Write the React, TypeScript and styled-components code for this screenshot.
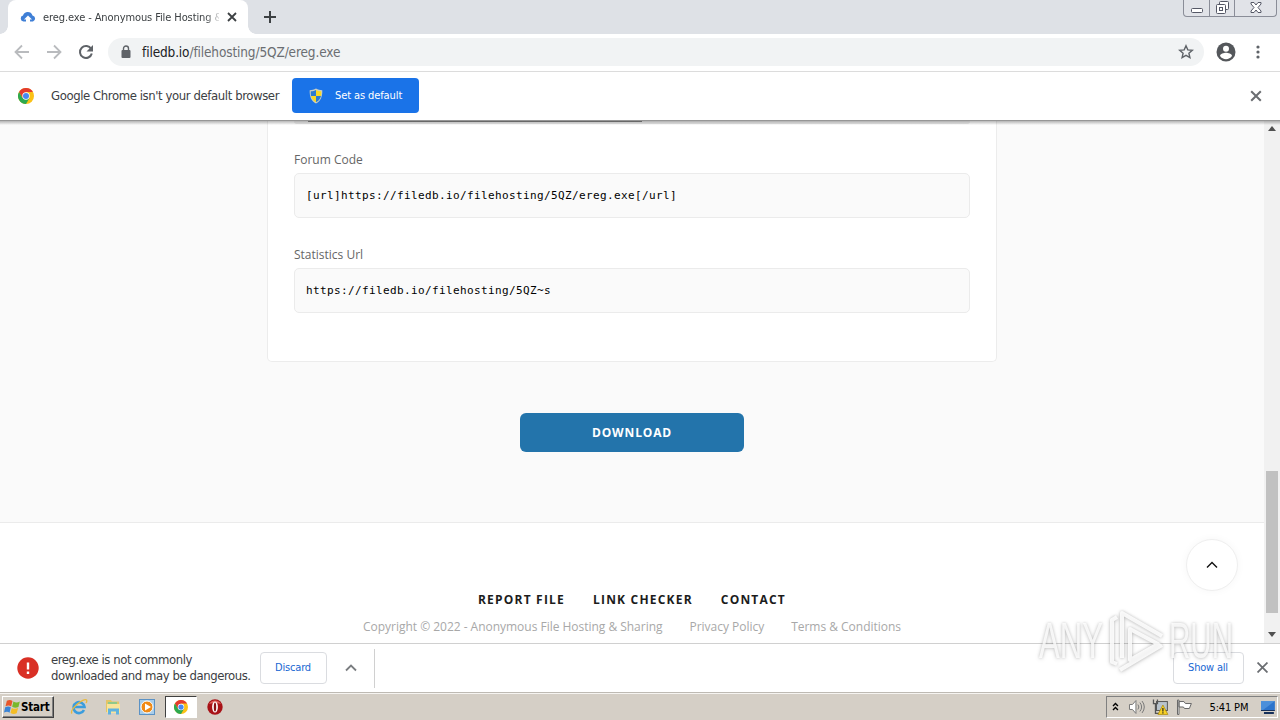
import React from 'react';
import styled, { createGlobalStyle } from 'styled-components';

const ui = "'DejaVu Sans Condensed', 'DejaVu Sans', sans-serif";

const GlobalStyle = createGlobalStyle`
  * { box-sizing: border-box; }
  body { margin: 0; overflow: hidden; }
`;

const Screen = styled.div`
  position: relative;
  display: flex;
  flex-direction: column;
  width: 1280px;
  height: 720px;
  overflow: hidden;
  background: #fff;
  color: #3c4043;
  font-family: ${ui};
  font-stretch: condensed;
`;

const TabStrip = styled.header`
  display: flex;
  flex: 0 0 34px;
  background: #dee1e6;
`;

const TabCorner = styled.div<{ $side: 'left' | 'right' }>`
  align-self: flex-end;
  width: 8px;
  height: 8px;
  background: radial-gradient(circle at ${({ $side }) => ($side === 'left' ? '0 0' : '100% 0')}, transparent 7.5px, #fff 8px);
`;

const Tab = styled.div`
  display: flex;
  align-items: center;
  width: 240px;
  padding: 0 11px 0 12px;
  border-radius: 8px 8px 0 0;
  background: #fff;
`;

const TabTitle = styled.span`
  width: 176px;
  margin: 0 8px 0 7px;
  overflow: hidden;
  white-space: nowrap;
  font-size: 11px;
  letter-spacing: -0.1px;
  mask-image: linear-gradient(90deg, #000 92%, rgba(0, 0, 0, 0.2));
`;

const NewTab = styled.div`
  display: flex;
  align-items: center;
  margin-left: 7px;
`;

const WindowButtons = styled.div`
  display: grid;
  grid-template-columns: 25px 25px 1fr;
  width: 94px;
  height: 17px;
  margin: 0 3px 0 auto;
  border: 1px solid #8a8d98;
  border-top: 0;
  border-radius: 0 0 4px 4px;
  background: #e1e3e8;
`;

const WindowButton = styled.div`
  display: flex;
  align-items: center;
  justify-content: center;
  padding-bottom: 1px;
  & + & { border-left: 1px solid #8a8d98; }
`;

const Toolbar = styled.div`
  display: flex;
  align-items: center;
  flex: 0 0 38px;
  padding: 0 14px 1px;
  gap: 16px;
  border-bottom: 1px solid #dcdcdc;
`;

const AddressBar = styled.div`
  display: flex;
  align-items: center;
  width: 1096px;
  height: 28px;
  margin-left: -2px;
  padding: 0 10px 0 12px;
  border-radius: 14px;
  background: #f1f3f4;
`;

const Address = styled.span`
  flex: 1;
  margin-left: 10px;
  color: #6b6e72;
  font-size: 13.5px;
  letter-spacing: -0.13px;
  b { color: #202124; font-weight: 400; }
`;

const InfoBar = styled.div`
  display: flex;
  align-items: center;
  flex: 0 0 49px;
  padding: 0 18px 1px;
  border-bottom: 1px solid #969696;
  font-size: 13px;
  > button { margin-left: 13px; }
  > svg:last-child { margin-left: auto; }
`;

const InfoText = styled.span`
  width: 228px;
  margin-left: 17px;
  white-space: nowrap;
  letter-spacing: -0.41px;
`;

const DefaultButton = styled.button`
  display: flex;
  align-items: center;
  width: 127px;
  height: 35px;
  padding: 0 0 0 16px;
  gap: 11px;
  border: 0;
  border-radius: 4px;
  background: #1a73e8;
  color: #fff;
  font: 11px ${ui};
  letter-spacing: -0.1px;
`;

const Viewport = styled.div`
  position: relative;
  display: flex;
  flex: 0 0 522px;
  background: #fafafa;

  &::after {
    content: '';
    position: absolute;
    inset: 0 0 auto;
    height: 4px;
    background: linear-gradient(rgba(0, 0, 0, 0.28), transparent);
  }
`;

const Page = styled.main`
  display: flex;
  flex-direction: column;
  align-items: center;
  width: 1264px;
  font-family: 'Open Sans', sans-serif;
  font-stretch: normal;
`;

const LinksCard = styled.section`
  width: 730px;
  height: 241px;
  padding: 0 26px;
  border: 1px solid #ececec;
  border-top: 0;
  border-radius: 0 0 5px 5px;
  background: #fff;
`;

const ClippedField = styled.div`
  height: 3px;
  padding-left: 14px;
  border-bottom: 1px solid #ebebeb;
  border-radius: 0 0 4px 4px;
  background: rgba(0, 0, 0, 0.05);

  &::before {
    content: '';
    display: block;
    width: 334px;
    height: 1px;
    background: #8a8a8a;
  }
`;

const Field = styled.label`
  display: block;
  height: 95px;
  padding-top: 26px;
`;

const FieldLabel = styled.span`
  display: block;
  height: 23px;
  color: #666;
  font-size: 12px;
  line-height: 20px;
`;

const Code = styled.div`
  height: 45px;
  padding-left: 11px;
  border: 1px solid #ebebeb;
  border-radius: 5px;
  background: #fafafa;
  color: #000;
  font-family: 'DejaVu Sans Mono', monospace;
  font-size: 11px;
  line-height: 43px;
  letter-spacing: 0.378px;
`;

const DownloadButton = styled.button`
  width: 224px;
  height: 39px;
  margin-top: 51px;
  border: 0;
  border-radius: 6px;
  background: #2374ab;
  color: #fff;
  font: 700 12px 'Open Sans', sans-serif;
  letter-spacing: 0.85px;
`;

const Footer = styled.footer`
  display: flex;
  flex-direction: column;
  align-items: center;
  width: 100%;
  height: 121px;
  margin-top: auto;
  padding-top: 67px;
  border-top: 1px solid #ebebeb;
  background: #fff;
`;

const FooterLinks = styled.nav`
  display: flex;
  gap: 28px;
  color: #1c1c1c;
  font-size: 12px;
  font-weight: 700;
  line-height: 20px;
  letter-spacing: 1.2px;
`;

const Legal = styled.div`
  display: flex;
  gap: 27px;
  margin-top: 7px;
  color: #a8a8a8;
  font-size: 12px;
  line-height: 20px;
  letter-spacing: -0.02px;
`;

const ToTop = styled.div`
  position: absolute;
  left: 1186px;
  top: 539px;
  display: flex;
  align-items: center;
  justify-content: center;
  width: 52px;
  height: 52px;
  border: 1px solid #efefef;
  border-radius: 50%;
  background: #fff;
  box-shadow: 0 0 8px rgba(0, 0, 0, 0.04);
`;

const Scrollbar = styled.div`
  display: flex;
  flex-direction: column;
  align-items: center;
  width: 16px;
  padding: 5px 0 6px;
  background: #f1f1f1;
`;

const Thumb = styled.div`
  width: 12px;
  height: 142px;
  margin: auto 0 19px;
  background: #c1c1c1;
`;

const DownloadShelf = styled.div`
  display: flex;
  align-items: center;
  flex: 0 0 49px;
  padding: 0 12px 0 17px;
  border-top: 1px solid #d0d0d0;
  background: #fff;
`;

const DownloadText = styled.div`
  width: 200px;
  margin: 0 9px 0 12px;
  font-size: 13px;
  line-height: 16px;
  letter-spacing: -0.44px;
  white-space: nowrap;
`;

const ShelfButton = styled.button<{ $width: number }>`
  width: ${({ $width }) => $width}px;
  height: 32px;
  padding: 0 1px 1px 0;
  border: 1px solid #dadce0;
  border-radius: 4px;
  background: #fff;
  color: #1967d2;
  font: 11px ${ui};
  letter-spacing: -0.2px;
`;

const Divider = styled.div`
  width: 1px;
  height: 39px;
  margin: 0 auto 0 17px;
  background: #d0d0d0;
`;

const Taskbar = styled.footer`
  display: flex;
  align-items: center;
  flex: 0 0 28px;
  padding: 1px 2px 0;
  border-top: 1px solid #bebab3;
  background: #d5cfc6;
  box-shadow: inset 0 1px #f6f4f1;
`;

const StartButton = styled.div`
  display: flex;
  align-items: center;
  width: 52px;
  height: 22px;
  padding-left: 1px;
  border: 1px solid;
  border-color: #fff #404040 #404040 #fff;
  box-shadow: inset -1px -1px #808080;
  color: #000;
  font-size: 11.5px;
  font-weight: 700;
  letter-spacing: -0.2px;
`;

const QuickLaunch = styled.div`
  display: flex;
  align-items: center;
  margin-left: 8px;
`;

const Launcher = styled.div<{ $active?: boolean }>`
  display: flex;
  align-items: center;
  justify-content: center;
  width: 34px;
  height: 22px;
  ${({ $active }) => $active && `
    width: 32px;
    margin: 0 1px;
    background: #fff;
    border: 1px solid;
    border-color: #404040 #fff #fff #404040;
  `}
`;

const Tray = styled.div`
  display: flex;
  align-items: center;
  width: 172px;
  height: 22px;
  margin-left: auto;
  padding: 0 1px 0 5px;
  border: 1px solid;
  border-color: #808080 #fff #fff #808080;
  color: #000;
  font-size: 11px;
`;

const Clock = styled.span`
  width: 42px;
  margin: 0 9px 0 17px;
  white-space: nowrap;
  letter-spacing: -0.15px;
`;

const Watermark = styled.svg`
  position: absolute;
  left: 1030px;
  top: 600px;
  filter: drop-shadow(0 0 1.5px rgba(0, 0, 0, 0.22)) drop-shadow(0 1px 2px rgba(0, 0, 0, 0.16));
`;

const Cross = ({ size = 10, color = '#5f6368', w = 1.8 }) => (
  <svg width={size} height={size} viewBox="0 0 10 10" stroke={color} strokeWidth={w}>
    <path d="M1 1l8 8M9 1L1 9" />
  </svg>
);

const Chevron = ({ color = '#7a7d80', w = 1.8 }) => (
  <svg width="12" height="8" viewBox="0 0 12 8" fill="none" stroke={color} strokeWidth={w}>
    <path d="M1 6.5l5-5 5 5" />
  </svg>
);

const ChromeLogo = ({ size = 16 }) => (
  <svg width={size} height={size} viewBox="0 0 16 16">
    <circle cx="8" cy="8" r="8" fill="#fbc116" />
    <path d="M8 4h6.93A8 8 0 0 0 1.07 4L4.5 10z" fill="#e33b2e" />
    <path d="M1.07 4A8 8 0 0 0 8 16l3.5-6L4.5 10z" fill="#2da94f" />
    <circle cx="8" cy="8" r="3.7" fill="#fff" />
    <circle cx="8" cy="8" r="3" fill="#4688f1" />
  </svg>
);

const Shield = () => (
  <svg width="16" height="16" viewBox="0 0 16 16">
    <path d="M8 .5c2 1.3 4 1.7 6.3 1.7C14.5 8 13 13 8 15.6 3 13 1.5 8 1.7 2.2 4 2.2 6 1.8 8 .5z" fill="#c9cfc4" />
    <path d="M8 2v6H3C2.7 6.5 2.7 5 2.8 3.3 5 3.2 6.5 2.8 8 2z" fill="#2b7bd0" />
    <path d="M8 2v6h5c.3-1.5.3-3 .2-4.7C11 3.2 9.5 2.8 8 2z" fill="#f7d824" />
    <path d="M8 8v6.3C5 12.7 3.6 10.5 3 8z" fill="#f7d824" />
    <path d="M8 8v6.3c3-1.6 4.4-3.8 5-6.3z" fill="#2b7bd0" />
  </svg>
);

const Arrow = ({ flip = false }) => (
  <svg width="16" height="16" viewBox="0 0 16 16" fill="none" stroke="#b9bbbe" strokeWidth="1.8">
    <path d={flip ? 'M1 8h13M8 1.5L14.5 8 8 14.5' : 'M15 8H2M8 1.5L1.5 8 8 14.5'} />
  </svg>
);

export default function App() {
  return (
    <Screen>
      <GlobalStyle />
      <TabStrip>
        <TabCorner $side="left" />
        <Tab>
          <svg width="16" height="16" viewBox="0 0 16 16">
            <path d="M6 12.5H3.5A3 3 0 0 1 3 6.6 5 5 0 0 1 12.5 6.5 3.1 3.1 0 0 1 13 12.500H10V10.500H12L8 6.500 4 10.500H6z" fill="#3f7fd6" />
          </svg>
          <TabTitle>ereg.exe - Anonymous File Hosting &amp; Sharing</TabTitle>
          <Cross color="#3c4043" />
        </Tab>
        <TabCorner $side="right" />
        <NewTab>
          <svg width="14" height="14" viewBox="0 0 14 14" stroke="#3c4043" strokeWidth="2"><path d="M7 1v12M1 7h12" /></svg>
        </NewTab>
        <WindowButtons>
          <WindowButton>
            <svg width="12" height="13" viewBox="0 0 12 13"><rect x=".5" y="7.5" width="11" height="4" rx="1" fill="#fff" stroke="#555866" /></svg>
          </WindowButton>
          <WindowButton>
            <svg width="13" height="13" viewBox="0 0 13 13" fill="#fff" stroke="#555866"><rect x="3.5" y=".5" width="9" height="8" rx="1" /><rect x=".5" y="3.5" width="9" height="9" rx="1" /><rect x="3.5" y="6.5" width="3" height="3" /></svg>
          </WindowButton>
          <WindowButton>
            <svg width="12" height="11" viewBox="0 0 12 11" fill="#fff" stroke="#555866"><path d="M1 .5h3l2 2.5L8 .5h3V2L8 5.500l3 3.500v1.500H8L6 8l-2 2.500H1V9l3-3.500L1 2z" /></svg>
          </WindowButton>
        </WindowButtons>
      </TabStrip>

      <Toolbar>
        <Arrow />
        <Arrow flip />
        <svg width="16" height="16" viewBox="0 0 16 16"><path d="M13.2 5A6 6 0 1 0 13.8 9.5" fill="none" stroke="#5f6368" strokeWidth="2" /><path d="M15 1v6.5H8.500z" fill="#5f6368" /></svg>
        <AddressBar>
          <svg width="12" height="14" viewBox="0 0 12 14"><rect x="1.5" y="5" width="9" height="8" rx="1" fill="#5f6368" /><path d="M3.5 6V3.5a2.5 2.5 0 0 1 5 0V6" fill="none" stroke="#5f6368" strokeWidth="1.4" /></svg>
          <Address><b>filedb.io</b>/filehosting/5QZ/ereg.exe</Address>
          <svg width="16" height="16" viewBox="0 0 16 16" fill="none" stroke="#5f6368" strokeWidth="1.4"><path d="M8 1.8l1.8 4.1 4.5.4-3.4 2.9 1 4.4L8 11.3l-3.9 2.3 1-4.4L1.7 6.3l4.5-.4z" /></svg>
        </AddressBar>
        <svg width="20" height="20" viewBox="0 0 20 20" style={{ marginLeft: -4 }}><circle cx="10" cy="10" r="9.5" fill="#54575b" /><circle cx="10" cy="6.8" r="3" fill="#fff" /><path d="M4 14c0-2.3 4-3.3 6-3.3s6 1 6 3.3a7.2 7.2 0 0 1-12 0z" fill="#fff" /></svg>
        <svg width="4" height="16" viewBox="0 0 4 16" fill="#5f6368" style={{ marginLeft: 4 }}><circle cx="2" cy="3" r="1.6" /><circle cx="2" cy="8" r="1.6" /><circle cx="2" cy="13" r="1.6" /></svg>
      </Toolbar>

      <InfoBar>
        <ChromeLogo />
        <InfoText>Google Chrome isn't your default browser</InfoText>
        <DefaultButton><Shield />Set as default</DefaultButton>
        <Cross size={12} color="#6b6e72" w={1.7} />
      </InfoBar>

      <Viewport>
        <Page>
          <LinksCard>
            <ClippedField />
            <Field>
              <FieldLabel>Forum Code</FieldLabel>
              <Code>[url]https://filedb.io/filehosting/5QZ/ereg.exe[/url]</Code>
            </Field>
            <Field>
              <FieldLabel>Statistics Url</FieldLabel>
              <Code>https://filedb.io/filehosting/5QZ~s</Code>
            </Field>
          </LinksCard>
          <DownloadButton>DOWNLOAD</DownloadButton>
          <Footer>
            <FooterLinks>
              <span>REPORT FILE</span>
              <span>LINK CHECKER</span>
              <span>CONTACT</span>
            </FooterLinks>
            <Legal>
              <span>Copyright © 2022 - Anonymous File Hosting &amp; Sharing</span>
              <span>Privacy Policy</span>
              <span>Terms &amp; Conditions</span>
            </Legal>
          </Footer>
        </Page>
        <Scrollbar>
          <svg width="8" height="5" viewBox="0 0 8 5"><path d="M0 5l4-5 4 5z" fill="#505050" /></svg>
          <Thumb />
          <svg width="8" height="5" viewBox="0 0 8 5"><path d="M0 0l4 5 4-5z" fill="#505050" /></svg>
        </Scrollbar>
      </Viewport>
      <ToTop><Chevron color="#111" w={1.4} /></ToTop>

      <DownloadShelf>
        <svg width="22" height="22" viewBox="0 0 22 22"><circle cx="11" cy="11" r="10.7" fill="#d93025" /><path d="M11 5.5v7M11 14.5V17" stroke="#fff" strokeWidth="2.4" /></svg>
        <DownloadText>ereg.exe is not commonly<br />downloaded and may be dangerous.</DownloadText>
        <ShelfButton $width={67}>Discard</ShelfButton>
        <svg width="12" height="8" viewBox="0 0 12 8" fill="none" stroke="#7a7d80" strokeWidth="1.8" style={{ marginLeft: 18 }}><path d="M1 6.5l5-5 5 5" /></svg>
        <Divider />
        <ShelfButton $width={71}>Show all</ShelfButton>
        <svg width="11" height="11" viewBox="0 0 10 10" stroke="#6b6e72" strokeWidth="1.6" style={{ margin: '0 0 2px 13px' }}><path d="M.5.5l9 9M9.5.5l-9 9" /></svg>
      </DownloadShelf>

      <Taskbar>
        <StartButton>
          <svg width="17" height="18" viewBox="0 0 15 16"><path d="M2.5 2.5c2-1 3.500-.8 5 .2L6.300 7.500c-1.500-1-3-1-5-.2z" fill="#e8562a" /><path d="M8.300 3.200c2 1 3.500 1 5.700 0L12.800 8c-2 1-3.700.8-5.600-.2z" fill="#79b82a" /><path d="M1 8.200c2-.9 3.500-.9 5 .1L4.900 13c-1.500-1-3-1-5 0z" fill="#3a84d6" /><path d="M6.900 8.800c2 1 3.500 1 5.600.1L11.200 13.500c-2 1-3.600.8-5.500-.1z" fill="#f4bd25" /></svg>
          Start
        </StartButton>
        <QuickLaunch>
          <Launcher>
            <svg width="18" height="18" viewBox="0 0 18 18" fill="none"><path d="M14 12a5.5 5.5 0 1 1 .5-3H5" stroke="#3b9ddd" strokeWidth="2.6" /><path d="M2 15.5C-1 12 14-1 16.5 2c.8 1-.5 3-.5 3" stroke="#e9b93c" strokeWidth="1.3" /></svg>
          </Launcher>
          <Launcher>
            <svg width="16" height="16" viewBox="0 0 16 16"><path d="M1 1h5l1 1.5h7V13H1z" fill="#e3c566" /><path d="M3 3h9v3H3z" fill="#8fc98a" /><path d="M2 5h13v9H2z" fill="#f8e49a" /><path d="M3 15.5v-6h11v6h-3v-3H6v3z" fill="#5fb2df" /></svg>
          </Launcher>
          <Launcher>
            <svg width="16" height="16" viewBox="0 0 16 16"><rect x=".5" y=".5" width="15" height="15" fill="#a8cdea" stroke="#5b92c5" /><circle cx="8" cy="8" r="6" fill="#f08a16" stroke="#fff" /><path d="M6 4.5L12 8l-6 3.500z" fill="#fff" /></svg>
          </Launcher>
          <Launcher $active><ChromeLogo size={14} /></Launcher>
          <Launcher>
            <svg width="16" height="16" viewBox="0 0 16 16"><circle cx="8" cy="8" r="7.7" fill="#a81217" /><path d="M2 5a7 7 0 0 1 12 0q-6-2-12 0z" fill="#e0605c" /><ellipse cx="8" cy="8" rx="2.900" ry="5.500" fill="#fff" /><ellipse cx="8" cy="8" rx="1.200" ry="4.600" fill="#8a1014" /></svg>
          </Launcher>
        </QuickLaunch>
        <Tray>
          <svg width="7" height="9" viewBox="0 0 7 9" fill="none" stroke="#000" strokeWidth="1.4" style={{ marginBottom: 2 }}><path d="M1 4l2.500-2.500L6 4M1 8l2.500-2.500L6 8" /></svg>
          <svg width="18" height="16" viewBox="0 0 18 16" fill="none" stroke="#777" style={{ marginLeft: 9 }}><path d="M1.5 5.5h3l3.500-4v13l-3.500-4h-3z" fill="#fff" /><path d="M10 5.500q2 2.500 0 5M12 3.500q3.500 4.500 0 9M14.200 2q4.500 6 0 12" /></svg>
          <svg width="17" height="16" viewBox="0 0 17 16" style={{ marginLeft: 6 }}><rect x="4.5" y="2.5" width="11" height="9" fill="#b9c3cc" stroke="#555" /><path d="M1.5.5v4h4v-4M3.5 4.5v10h6" fill="none" stroke="#555" strokeWidth="1.3" /><path d="M11 6l5 9.500H6z" fill="#f8d226" stroke="#a88600" strokeWidth=".7" /><path d="M11 9v3.500M11 13.300v1.200" stroke="#222" strokeWidth="1.2" /></svg>
          <svg width="17" height="16" viewBox="0 0 17 16" fill="#fff" stroke="#666" style={{ marginLeft: 7 }}><path d="M1.5 1v14.500H3V1zM3 2.500h5l1.500 2h6l-2 5h-5l-1-1.500H3z" /></svg>
          <Clock>5:41 PM</Clock>
          <svg width="16" height="14" viewBox="0 0 16 14"><path d="M1 1h14v9H1z" fill="#2c74cc" /><path d="M1 1h14L3 10H1z" fill="#6aa9e8" opacity=".5" /><path d="M4 12h10v2H4zM1 10h14v1H1z" fill="#16305a" /></svg>
        </Tray>
      </Taskbar>

      <Watermark width="215" height="90" viewBox="0 0 215 90" fill="#fff" fillOpacity=".8">
        <text x="9" y="58" fontFamily="Liberation Sans" fontSize="50" textLength="64" lengthAdjust="spacingAndGlyphs">ANY</text>
        <text x="139" y="58" fontFamily="Liberation Sans" fontSize="50" textLength="64" lengthAdjust="spacingAndGlyphs">RUN</text>
        <path d="M87 17l-5 3v42l5 2M92 58V13l40 23M100 29l28 15-28 16zM90 70l42-25" fill="none" stroke="#fff" strokeOpacity=".85" strokeWidth="4" strokeLinejoin="round" />
      </Watermark>
    </Screen>
  );
}
